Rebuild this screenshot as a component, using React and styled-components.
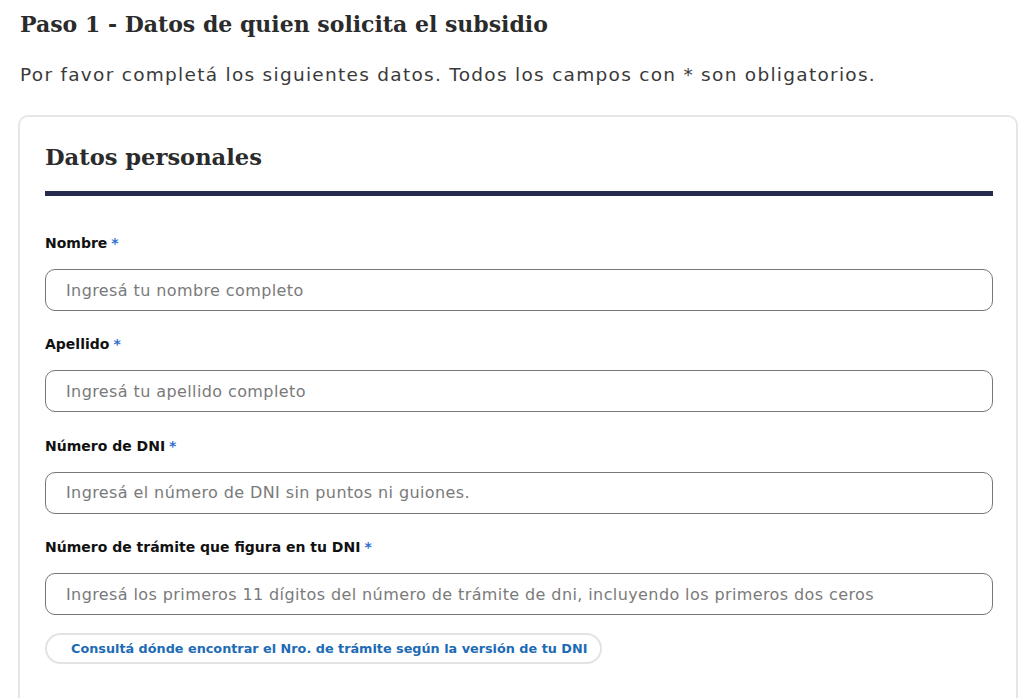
import React from "react";
import styled, { createGlobalStyle } from "styled-components";

const Global = createGlobalStyle`
  html, body { margin: 0; padding: 0; background: #ffffff; }
  body { font-family: "DejaVu Sans", "Noto Sans", sans-serif; color: #333; }
  * { box-sizing: border-box; }
`;

const Page = styled.main`
  padding: 8px 6px 0 18px;
`;

const StepTitle = styled.h2`
  margin: 0;
  padding-left: 2px;
  font-family: "DejaVu Serif", "Liberation Serif", serif;
  font-weight: 700;
  font-size: 22px;
  line-height: 32px;
  color: #2b2b2b;
`;

const Intro = styled.p`
  margin: 23px 0 0;
  padding-left: 2px;
  font-size: 18.5px;
  letter-spacing: 1.28px;
  line-height: 24px;
  color: #3a3a3a;
`;

const Card = styled.section`
  margin-top: 28px;
  border: 2px solid #e6e6e6;
  border-bottom: none;
  border-radius: 10px 10px 0 0;
  padding: 23px 23px 40px 25px;
`;

const CardTitle = styled.h3`
  margin: 0;
  font-family: "DejaVu Serif", "Liberation Serif", serif;
  font-weight: 700;
  font-size: 22.6px;
  line-height: 34px;
  color: #2b2b2b;
  padding-bottom: 17px;
  border-bottom: 5px solid #242b4f;
`;

const Fields = styled.div`
  display: flex;
  flex-direction: column;
  gap: 24.4px;
  margin-top: 38px;
`;

const Field = styled.div`
  display: flex;
  flex-direction: column;
`;

const Label = styled.label`
  font-size: 14px;
  line-height: 19px;
  font-weight: 700;
  color: #111;
  margin-bottom: 16px;
`;

const Req = styled.span`
  color: #2f6fcf;
  margin-left: 4px;
`;

const Input = styled.input`
  height: 42px;
  width: 100%;
  border: 1px solid #777;
  border-radius: 10px;
  padding: 0 20px;
  font-family: inherit;
  font-size: 16px;
  letter-spacing: 0.4px;
  color: #333;
  background: #fff;
  &::placeholder { color: #7a7a7a; }
`;

const HelpButton = styled.button`
  align-self: flex-start;
  margin-top: 18px;
  height: 31px;
  padding: 0 13px 0 24px;
  border: 2px solid #e3e3e3;
  border-radius: 16px;
  background: #fff;
  font-family: inherit;
  font-weight: 700;
  font-size: 12.8px;
  color: #1d6bb5;
`;

const fields = [
  { label: "Nombre", ph: "Ingresá tu nombre completo" },
  { label: "Apellido", ph: "Ingresá tu apellido completo" },
  { label: "Número de DNI", ph: "Ingresá el número de DNI sin puntos ni guiones." },
  {
    label: "Número de trámite que figura en tu DNI",
    ph: "Ingresá los primeros 11 dígitos del número de trámite de dni, incluyendo los primeros dos ceros",
    help: true,
  },
];

export default function App() {
  return (
    <>
      <Global />
      <Page>
        <StepTitle>Paso 1 - Datos de quien solicita el subsidio</StepTitle>
        <Intro>Por favor completá los siguientes datos. Todos los campos con * son obligatorios.</Intro>
        <Card>
          <CardTitle>Datos personales</CardTitle>
          <Fields>
            {fields.map((f) => (
              <Field key={f.label}>
                <Label>
                  {f.label}
                  <Req>*</Req>
                </Label>
                <Input placeholder={f.ph} />
                {f.help && (
                  <HelpButton type="button">
                    Consultá dónde encontrar el Nro. de trámite según la versión de tu DNI
                  </HelpButton>
                )}
              </Field>
            ))}
          </Fields>
        </Card>
      </Page>
    </>
  );
}
